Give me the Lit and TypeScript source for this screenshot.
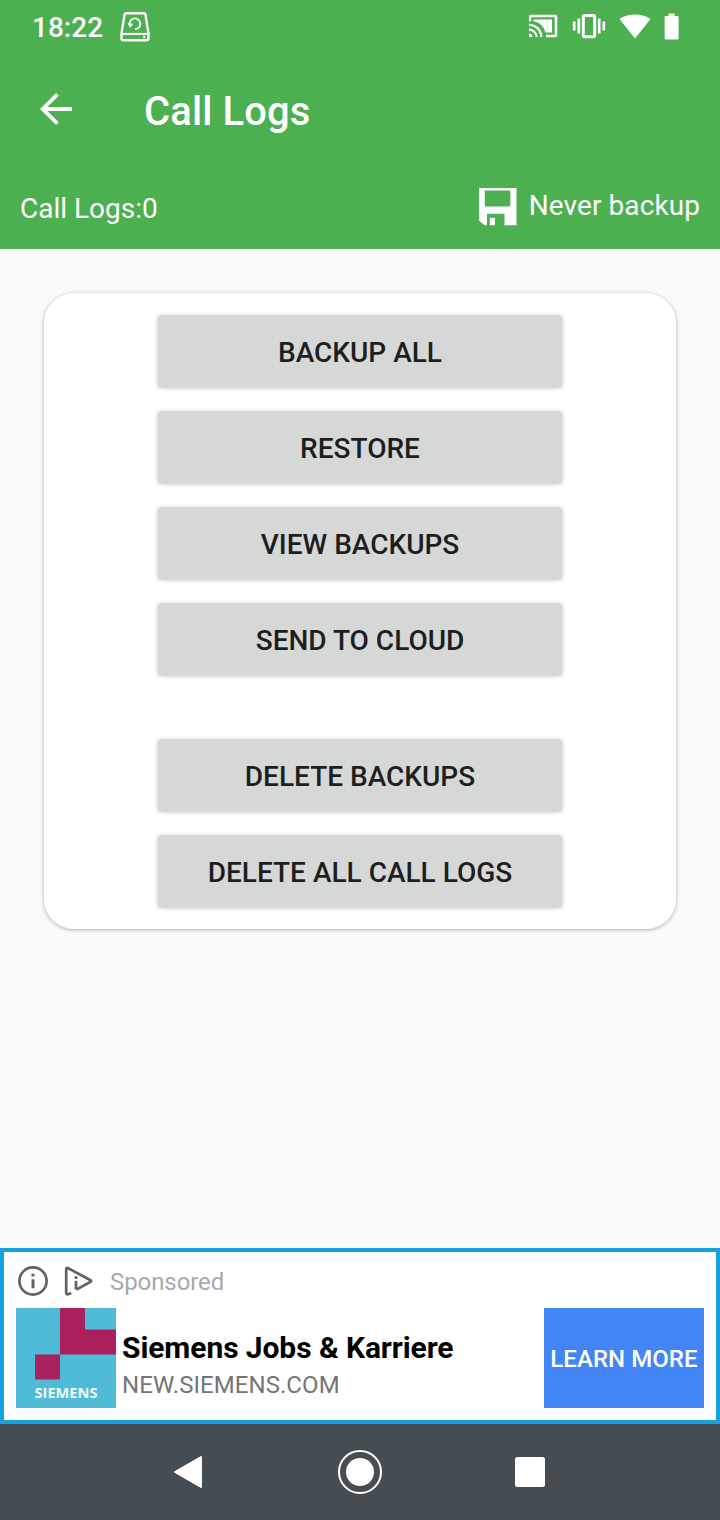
import { LitElement, html, css, svg } from "lit";
import { customElement, property } from "lit/decorators.js";

const castIcon = html`<svg width="29" height="24" viewBox="529 14 29 24" fill="none" stroke="#fff">
  <path d="M530 21.5V17a1 1 0 0 1 1-1h24a1 1 0 0 1 1 1v18a1 1 0 0 1-1 1h-9" stroke-width="2.5"/>
  <path d="M533.5 19.5H552V32.5H545.5C544 26.5 539.5 22 533.5 21.2Z" fill="#fff" stroke="none"/>
  <path d="M529 24.8A12 12 0 0 1 541.2 37M529 29.6A7.5 7.5 0 0 1 536.5 37" stroke-width="2.2"/>
  <path d="M529 33.5A3.5 3.5 0 0 1 532.5 37H529Z" fill="#fff" stroke="none"/>
</svg>`;

const vibrateIcon = html`<svg width="34" height="26" viewBox="572 13 34 26" fill="none" stroke="#fff">
  <rect x="583.3" y="15.4" width="11.4" height="21.4" rx="1.5" stroke-width="3"/>
  <path d="M578.8 18.5V33.5M599.2 18.5V33.5M574.2 21.5V30.5M603.8 21.5V30.5" stroke-width="2.7"/>
</svg>`;

const wifiIcon = html`<svg width="32" height="25" viewBox="618.5 13.5 32 25">
  <path d="M634.5 38L619 18.5C627 12.5 642 12.5 650 18.5Z" fill="#fff"/>
</svg>`;

const batteryIcon = html`<svg width="15" height="27" viewBox="664.5 12.5 15 27">
  <path d="M669 13h6v2.6h2.9a1.2 1.2 0 0 1 1.2 1.2v21a1.2 1.2 0 0 1-1.2 1.2h-11.6a1.2 1.2 0 0 1-1.2-1.2v-21a1.2 1.2 0 0 1 1.2-1.2h2.7z" fill="#fff"/>
</svg>`;

const driveIcon = html`<svg width="32" height="32" viewBox="119 11 32 32" fill="none" stroke="#fff">
  <path d="M126.2 13.3h17.6a1.8 1.8 0 0 1 1.7 1.4l3 18.8v4.7a2 2 0 0 1-2 2h-23a2 2 0 0 1-2-2v-4.7l3-18.8a1.8 1.8 0 0 1 1.7-1.4z" stroke-width="2.4"/>
  <path d="M121.5 33.9H148.5" stroke-width="2"/>
  <path d="M129.8 25.5A5.4 5.4 0 1 1 135 29.2" stroke-width="1.8"/>
  <path d="M127.6 23.3l5.6.4-3 4.2z" fill="#fff" stroke="none"/>
  <circle cx="144.3" cy="37" r="1.3" fill="#fff" stroke="none"/>
</svg>`;

const backIcon = html`<svg width="34" height="34" viewBox="39 92 34 34" fill="none" stroke="#fff" stroke-width="3.8">
  <path d="M72 109H42.3M57.4 94.3L42.7 109L57.4 123.7"/>
</svg>`;

const floppyIcon = html`<svg width="39" height="39" viewBox="478 187 39 39" fill="#fff">
  <path fill-rule="evenodd" d="M479 188H516.5V225.2H504.5V213.8H487V225.2H484.5L479 220.5ZM484.8 190.5V206.4H510.4V190.5Z"/>
  <path d="M489.8 217.8H495V225.2H489.8Z"/>
</svg>`;

const infoIcon = html`<svg width="32" height="32" viewBox="17 1265 32 32" fill="none" stroke="#5f6368">
  <circle cx="33" cy="1281" r="13.6" stroke-width="2.7"/>
  <path d="M33 1279.3V1288.2M33 1273.8V1276.6" stroke-width="3"/>
</svg>`;

const adChoicesIcon = html`<svg width="31" height="32" viewBox="64 1265 31 32" fill="none" stroke="#5f6368">
  <path d="M71.3 1293.2L68 1294.3Q66.2 1294.6 66.2 1292.5V1269.2Q66.2 1267.3 68.2 1268.2L90.5 1280.2Q91.8 1281 90.5 1281.9L76.5 1289.5" stroke-width="2.7"/>
  <path d="M76 1280.8V1289.5M76 1276.3V1279.1" stroke-width="2.7"/>
</svg>`;

const siemensMark = svg`
  <rect width="100" height="100" fill="#50bbd7"/>
  <path d="M44 0H69V21.5H100V46.5H44ZM19 46.5H44V71.5H19Z" fill="#ab215e"/>
  <text x="18.5" y="90" textLength="63" lengthAdjust="spacingAndGlyphs"
    font-family="'Open Sans', 'Noto Sans', sans-serif" font-size="13.8" font-weight="700" fill="#effafd">SIEMENS</text>`;

@customElement("action-button")
export class ActionButton extends LitElement {
  @property() label = "";

  static styles = css`
    :host { display: block; }
    .button {
      display: block;
      box-sizing: border-box;
      width: 404px;
      height: 72px;
      padding: 3px 0 0;
      border: 0;
      border-radius: 4px;
      background: #d6d8d7;
      color: #1d1e1e;
      font: 500 28px/69px Roboto, sans-serif;
      text-align: center;
      box-shadow: 0 1px 4px rgba(0, 0, 0, 0.27);
    }
  `;

  render() {
    return html`<button class="button">${this.label}</button>`;
  }
}

@customElement("app-root")
export class AppRoot extends LitElement {
  static styles = css`
    :host {
      display: flex;
      flex-direction: column;
      height: 1520px;
      background: #fafafa;
      font-family: Roboto, sans-serif;
      overflow: hidden;
    }
    svg { display: block; flex: none; }
    .header { height: 249px; background: #4caf50; color: #fff; }
    .status {
      display: flex;
      align-items: center;
      height: 54px;
      padding: 0 41px 0 32px;
      font: 500 28px/54px Roboto, sans-serif;
    }
    .time { width: 87px; padding-top: 2px; }
    .indicators { display: flex; align-items: center; margin-left: auto; height: 52px; gap: 13px; align-self: flex-start; }
    .indicators svg:first-child { margin-right: 1px; }
    .toolbar { display: flex; align-items: center; height: 114px; padding-left: 39px; gap: 71px; }
    .toolbar svg { margin-bottom: 4px; }
    .title { font-size: 40px; font-weight: 500; letter-spacing: 0.1px; }
    .summary {
      display: flex;
      justify-content: space-between;
      height: 81px;
      padding: 0 20px;
      font-size: 28px;
      line-height: 81px;
    }
    .backup { display: flex; align-items: center; gap: 12px; height: 76px; line-height: 76px; letter-spacing: 0.08px; }
    .content { flex: 1; padding: 44px; }
    .card {
      display: flex;
      flex-direction: column;
      align-items: center;
      gap: 24px;
      padding: 22px 0 22px;
      border-radius: 30px;
      background: #fff;
      box-shadow: 0 1px 4px rgba(0, 0, 0, 0.3);
    }
    .danger { display: flex; flex-direction: column; gap: 24px; padding-top: 40px; }
    .ad {
      box-sizing: border-box;
      height: 176px;
      border: 4px solid #12a3e0;
      background: #fff;
      padding: 13px 12px 0;
    }
    .sponsor { display: flex; align-items: center; height: 32px; padding-left: 1px; gap: 15px; color: #a9a9a9; font-size: 24px; line-height: 34px; }
    .sponsor-text { padding-top: 2px; letter-spacing: -0.08px; }
    .promo { display: flex; height: 100px; margin-top: 11px; }
    .promo-text { flex: 1; padding: 20px 0 0 6px; }
    .promo-title { font-size: 30px; font-weight: 700; line-height: 40px; color: #000; letter-spacing: -0.08px; }
    .promo-site { font-size: 24px; line-height: 34px; color: #757575; letter-spacing: 0.06px; }
    .cta { width: 160px; background: #4285f4; color: #fff; font: 500 24px/102px Roboto, sans-serif; letter-spacing: 0.06px; text-align: center; white-space: nowrap; }
    .nav { height: 96px; background: #454d52; }
  `;

  render() {
    return html`
      <header class="header">
        <div class="status">
          <span class="time">18:22</span>${driveIcon}
          <div class="indicators">${castIcon}${vibrateIcon}${wifiIcon}${batteryIcon}</div>
        </div>
        <div class="toolbar">${backIcon}<span class="title">Call Logs</span></div>
        <div class="summary">
          <span>Call Logs:0</span>
          <span class="backup">${floppyIcon}<span>Never backup</span></span>
        </div>
      </header>
      <main class="content">
        <section class="card">
          ${["BACKUP ALL", "RESTORE", "VIEW BACKUPS", "SEND TO CLOUD"].map(
            (label) => html`<action-button .label=${label}></action-button>`
          )}
          <div class="danger">
            ${["DELETE BACKUPS", "DELETE ALL CALL LOGS"].map(
              (label) => html`<action-button .label=${label}></action-button>`
            )}
          </div>
        </section>
      </main>
      <aside class="ad">
        <div class="sponsor">${infoIcon}${adChoicesIcon}<span class="sponsor-text">Sponsored</span></div>
        <div class="promo">
          <svg width="100" height="100" viewBox="0 0 100 100">${siemensMark}</svg>
          <div class="promo-text">
            <div class="promo-title">Siemens Jobs &amp; Karriere</div>
            <div class="promo-site">NEW.SIEMENS.COM</div>
          </div>
          <div class="cta">LEARN MORE</div>
        </div>
      </aside>
      <nav class="nav">
        <svg width="720" height="96" viewBox="0 1424 720 96" fill="#fff">
          <path d="M175 1472L201 1457V1487Z" stroke="#fff" stroke-width="2" stroke-linejoin="round"/>
          <circle cx="360" cy="1472" r="21" fill="none" stroke="#fff" stroke-width="2"/>
          <circle cx="360" cy="1472" r="14"/>
          <rect x="515" y="1457" width="30" height="30" rx="2.5"/>
        </svg>
      </nav>
    `;
  }
}
